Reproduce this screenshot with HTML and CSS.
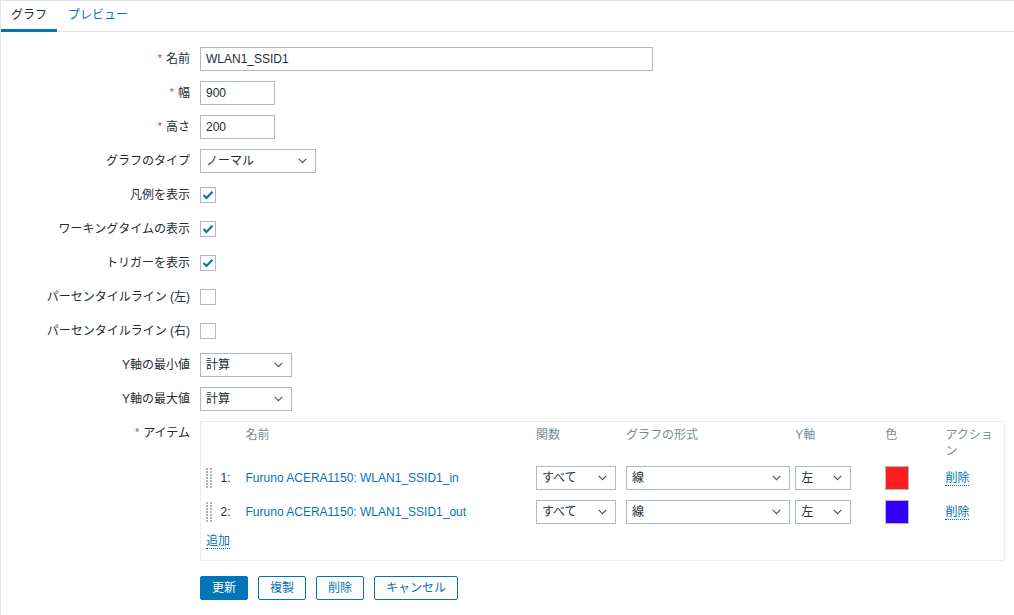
FILE: index.html
```html
<!DOCTYPE html>
<html lang="ja">
<head>
<meta charset="utf-8">
<title>グラフ</title>
<link rel="stylesheet" href="styles.css">
</head>
<body>
<div class="page">
  <nav class="tabs">
    <a class="tab active">グラフ</a>
    <a class="tab">プレビュー</a>
  </nav>
  <form class="form">
    <div class="row">
      <label class="lbl"><span class="req">*</span>名前</label>
      <input class="input w-name" type="text" value="WLAN1_SSID1">
    </div>
    <div class="row">
      <label class="lbl"><span class="req">*</span>幅</label>
      <input class="input w-num" type="text" value="900">
    </div>
    <div class="row">
      <label class="lbl"><span class="req">*</span>高さ</label>
      <input class="input w-num" type="text" value="200">
    </div>
    <div class="row">
      <label class="lbl">グラフのタイプ</label>
      <div class="select w-type"><span>ノーマル</span><svg class="chev" width="9" height="6" viewBox="0 0 9 6"><polyline points="0.7,0.8 4.5,4.6 8.3,0.8" fill="none" stroke="#555" stroke-width="1.2"/></svg></div>
    </div>
    <div class="row">
      <label class="lbl">凡例を表示</label>
      <span class="check"><svg width="12" height="10" viewBox="0 0 12 10"><polyline points="1.5,5 4.5,8 10.5,1.8" fill="none" stroke="#0275b8" stroke-width="2.2"/></svg></span>
    </div>
    <div class="row">
      <label class="lbl">ワーキングタイムの表示</label>
      <span class="check"><svg width="12" height="10" viewBox="0 0 12 10"><polyline points="1.5,5 4.5,8 10.5,1.8" fill="none" stroke="#0275b8" stroke-width="2.2"/></svg></span>
    </div>
    <div class="row">
      <label class="lbl">トリガーを表示</label>
      <span class="check"><svg width="12" height="10" viewBox="0 0 12 10"><polyline points="1.5,5 4.5,8 10.5,1.8" fill="none" stroke="#0275b8" stroke-width="2.2"/></svg></span>
    </div>
    <div class="row">
      <label class="lbl">パーセンタイルライン (左)</label>
      <span class="check"></span>
    </div>
    <div class="row">
      <label class="lbl">パーセンタイルライン (右)</label>
      <span class="check"></span>
    </div>
    <div class="row">
      <label class="lbl">Y軸の最小値</label>
      <div class="select w-y"><span>計算</span><svg class="chev" width="9" height="6" viewBox="0 0 9 6"><polyline points="0.7,0.8 4.5,4.6 8.3,0.8" fill="none" stroke="#555" stroke-width="1.2"/></svg></div>
    </div>
    <div class="row">
      <label class="lbl">Y軸の最大値</label>
      <div class="select w-y"><span>計算</span><svg class="chev" width="9" height="6" viewBox="0 0 9 6"><polyline points="0.7,0.8 4.5,4.6 8.3,0.8" fill="none" stroke="#555" stroke-width="1.2"/></svg></div>
    </div>
    <div class="row row-top">
      <label class="lbl lbl-top"><span class="req">*</span>アイテム</label>
      <table class="items">
        <colgroup>
          <col class="c-drag"><col class="c-num"><col class="c-name"><col class="c-func"><col class="c-type"><col class="c-axis"><col class="c-color"><col class="c-act">
        </colgroup>
        <thead>
          <tr><th></th><th></th><th>名前</th><th>関数</th><th>グラフの形式</th><th>Y軸</th><th>色</th><th>アクション</th></tr>
        </thead>
        <tbody>
          <tr>
            <td><svg class="drag" width="6" height="20" viewBox="0 0 6 20"><g fill="#aab4bb"><rect x="0" y="0" width="2" height="2"/><rect x="4" y="0" width="2" height="2"/><rect x="0" y="3" width="2" height="2"/><rect x="4" y="3" width="2" height="2"/><rect x="0" y="6" width="2" height="2"/><rect x="4" y="6" width="2" height="2"/><rect x="0" y="9" width="2" height="2"/><rect x="4" y="9" width="2" height="2"/><rect x="0" y="12" width="2" height="2"/><rect x="4" y="12" width="2" height="2"/><rect x="0" y="15" width="2" height="2"/><rect x="4" y="15" width="2" height="2"/><rect x="0" y="18" width="2" height="2"/><rect x="4" y="18" width="2" height="2"/></g></svg></td>
            <td>1:</td>
            <td><a class="link">Furuno ACERA1150: WLAN1_SSID1_in</a></td>
            <td><div class="select w-func"><span>すべて</span><svg class="chev" width="9" height="6" viewBox="0 0 9 6"><polyline points="0.7,0.8 4.5,4.6 8.3,0.8" fill="none" stroke="#555" stroke-width="1.2"/></svg></div></td>
            <td><div class="select w-gtype"><span>線</span><svg class="chev" width="9" height="6" viewBox="0 0 9 6"><polyline points="0.7,0.8 4.5,4.6 8.3,0.8" fill="none" stroke="#555" stroke-width="1.2"/></svg></div></td>
            <td><div class="select w-axis"><span>左</span><svg class="chev" width="9" height="6" viewBox="0 0 9 6"><polyline points="0.7,0.8 4.5,4.6 8.3,0.8" fill="none" stroke="#555" stroke-width="1.2"/></svg></div></td>
            <td><span class="swatch red"></span></td>
            <td><a class="link dotted">削除</a></td>
          </tr>
          <tr>
            <td><svg class="drag" width="6" height="20" viewBox="0 0 6 20"><g fill="#aab4bb"><rect x="0" y="0" width="2" height="2"/><rect x="4" y="0" width="2" height="2"/><rect x="0" y="3" width="2" height="2"/><rect x="4" y="3" width="2" height="2"/><rect x="0" y="6" width="2" height="2"/><rect x="4" y="6" width="2" height="2"/><rect x="0" y="9" width="2" height="2"/><rect x="4" y="9" width="2" height="2"/><rect x="0" y="12" width="2" height="2"/><rect x="4" y="12" width="2" height="2"/><rect x="0" y="15" width="2" height="2"/><rect x="4" y="15" width="2" height="2"/><rect x="0" y="18" width="2" height="2"/><rect x="4" y="18" width="2" height="2"/></g></svg></td>
            <td>2:</td>
            <td><a class="link">Furuno ACERA1150: WLAN1_SSID1_out</a></td>
            <td><div class="select w-func"><span>すべて</span><svg class="chev" width="9" height="6" viewBox="0 0 9 6"><polyline points="0.7,0.8 4.5,4.6 8.3,0.8" fill="none" stroke="#555" stroke-width="1.2"/></svg></div></td>
            <td><div class="select w-gtype"><span>線</span><svg class="chev" width="9" height="6" viewBox="0 0 9 6"><polyline points="0.7,0.8 4.5,4.6 8.3,0.8" fill="none" stroke="#555" stroke-width="1.2"/></svg></div></td>
            <td><div class="select w-axis"><span>左</span><svg class="chev" width="9" height="6" viewBox="0 0 9 6"><polyline points="0.7,0.8 4.5,4.6 8.3,0.8" fill="none" stroke="#555" stroke-width="1.2"/></svg></div></td>
            <td><span class="swatch blue"></span></td>
            <td><a class="link dotted">削除</a></td>
          </tr>
          <tr class="add-row">
            <td colspan="8"><a class="link dotted">追加</a></td>
          </tr>
        </tbody>
      </table>
    </div>
    <div class="row buttons-row">
      <span></span>
      <div class="buttons">
        <button type="button" class="btn primary">更新</button>
        <button type="button" class="btn">複製</button>
        <button type="button" class="btn">削除</button>
        <button type="button" class="btn">キャンセル</button>
      </div>
    </div>
  </form>
</div>
</body>
</html>
```

FILE: styles.css
```css
* { box-sizing: border-box; }

html, body {
  margin: 0;
  background: #ffffff;
}

body {
  font-family: "Liberation Sans", "Noto Sans CJK JP", sans-serif;
  font-size: 12px;
  line-height: 15px;
  color: #1f2c33;
}

.page {
  border-top: 1px solid #dfe4e7;
  border-left: 1px solid #dfe4e7;
  min-height: 615px;
}

.tabs {
  display: flex;
  height: 31px;
  border-bottom: 1px solid #dfe4e7;
}

.tab {
  display: block;
  height: 31px;
  padding: 0 10px 0 11px;
  line-height: 28px;
  color: #0275b8;
  border-bottom: 3px solid transparent;
  cursor: pointer;
}

.tab.active {
  color: #1f2c33;
  border-bottom-color: #0275b8;
  padding: 0 10px 0 10px;
}

.form {
  display: flex;
  flex-direction: column;
  gap: 10px;
  padding-top: 15px;
  margin: 0;
}

.row {
  display: grid;
  grid-template-columns: 189px auto;
  column-gap: 10px;
  align-items: center;
  justify-items: start;
  min-height: 24px;
}

.row-top { align-items: start; }

.lbl {
  justify-self: end;
  text-align: right;
  white-space: nowrap;
}

.lbl-top { padding-top: 5px; }

.req {
  color: #e33734;
  font-size: 11px;
  margin-right: 4px;
  position: relative;
  top: -1px;
}

.input {
  height: 24px;
  border: 1px solid #acbbc2;
  background: #fff;
  padding: 0 5px;
  font: inherit;
  color: #1f2c33;
  outline: none;
}

.w-name { width: 453px; }
.w-num { width: 75px; }

.select {
  display: flex;
  align-items: center;
  justify-content: space-between;
  height: 24px;
  border: 1px solid #acbbc2;
  background: #fff;
  padding: 0 8px 0 5px;
  color: #1f2c33;
}

.chev { display: block; }

.w-type { width: 116px; }
.w-y { width: 92px; }
.w-func { width: 80px; }
.w-gtype { width: 164px; }
.w-axis { width: 56px; }

.check {
  display: flex;
  align-items: center;
  justify-content: center;
  width: 16px;
  height: 16px;
  border: 1px solid #acbbc2;
  background: #fff;
}

.items {
  width: 805px;
  table-layout: fixed;
  border-collapse: collapse;
  border: 1px solid #ebeef0;
}

.c-drag { width: 15px; }
.c-num { width: 25px; }
.c-name { width: 290px; }
.c-func { width: 90px; }
.c-type { width: 169px; }
.c-axis { width: 90px; }
.c-color { width: 60px; }
.c-act { width: 64px; }

.items th {
  font-weight: normal;
  color: #768d99;
  text-align: left;
  vertical-align: top;
  line-height: 16px;
  padding: 5px 5px 2px 5px;
}

.items td {
  padding: 5px 5px;
  vertical-align: middle;
  white-space: nowrap;
}

.items td:first-child,
.items th:first-child { padding-right: 0; }

.drag { display: block; }

.link {
  color: #0275b8;
  text-decoration: none;
  cursor: pointer;
}

.dotted {
  border-bottom: 1px dotted #0275b8;
}

.swatch {
  display: block;
  width: 24px;
  height: 24px;
  border: 1px solid #acbbc2;
}

.swatch.red { background: #ff1e1e; }
.swatch.blue { background: #3300ff; }

.items .add-row td {
  padding: 5px 5px 11px 5px;
}

.buttons-row { margin-top: 5px; }

.buttons {
  display: flex;
  gap: 10px;
}

.btn {
  height: 24px;
  padding: 0 11px;
  font: inherit;
  color: #0275b8;
  background: #fff;
  border: 1px solid #0275b8;
  border-radius: 2px;
  cursor: pointer;
}

.btn.primary {
  background: #0275b8;
  color: #fff;
}
```
